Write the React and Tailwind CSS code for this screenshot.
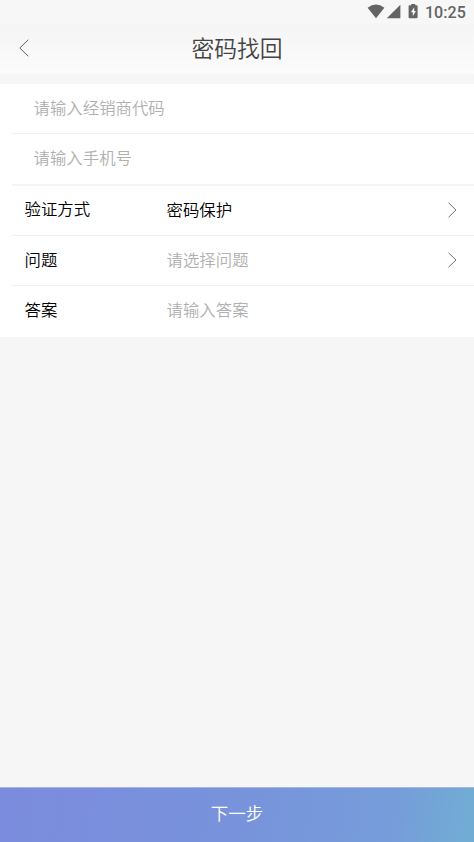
function Chevron({ left = false }) {
  return left ? (
    <svg width="10" height="18" viewBox="0 0 10 18" fill="none" stroke="#606060" strokeWidth="1">
      <path d="M9.3 .7 .8 9l8.5 8.3" />
    </svg>
  ) : (
    <svg width="9" height="16" viewBox="0 0 9 16" fill="none" stroke="#707070" strokeWidth="1">
      <path d="M.5 .8 8 8 .5 15.2" />
    </svg>
  );
}

function StatusBar() {
  return (
    <div className="flex h-6 items-start justify-end bg-[#f7f7f7] pr-2 text-[#646464]">
      <svg className="mt-1" width="54" height="16" viewBox="0 0 54 16" fill="currentColor">
        <path d="M.6 3.7Q9-2.7 17.4 3.7L9 14.3Z" />
        <path d="M33.4 .7V14.3H19.8Z" />
        <path fillRule="evenodd" d="M44.2 1.3V0h4v1.3h1.4q1 0 1 1v11q0 1-1 1h-7q-1 0-1-1v-11q0-1 1-1ZM47.2 3.2 43.9 8.3h1.9v4l3.1-5.4h-1.7Z" />
      </svg>
      <span className="ml-[4px] font-[Roboto] text-[16px] font-medium leading-[25px] tracking-[0.1px]">10:25</span>
    </div>
  );
}

function Row({ label, value, muted, arrow, last, raised }) {
  return (
    <div className={`ml-3 flex h-[50px] items-center border-[#f0f0f0] pl-[12.6px] pr-[17px] ${last ? "" : "border-b"}`}>
      <span className={`w-[142px] text-black ${raised ? "pb-[6px]" : "pb-1"}`}>{label}</span>
      <span className={`flex-1 pb-1 ${muted ? "text-[#b0b0b0]" : "text-black"}`}>{value}</span>
      {arrow && <span className="pb-[2px]"><Chevron /></span>}
    </div>
  );
}

export default function App() {
  return (
    <main className="flex h-[842px] w-[474px] flex-col overflow-hidden bg-[#f6f6f6] font-['Noto_Sans_CJK_SC',sans-serif] font-[350]">
      <StatusBar />
      <header className="grid h-[50px] grid-cols-[80px_1fr_80px] items-center bg-gradient-to-b from-[#f5f5f5] to-[#fbfbfb]">
        <button className="pb-[2px] pl-[19px]" aria-label="返回"><Chevron left /></button>
        <h1 className="pb-[2px] text-center text-[22.8px] font-[350] leading-[48px] text-[#444]">密码找回</h1>
      </header>
      <section className="mt-[10px] h-[253px] bg-white text-[16.4px] leading-6">
        <div className="ml-3 flex h-[50px] items-center border-b border-[#f0f0f0] pb-1 pl-[21.6px] text-[#b0b0b0]">请输入经销商代码</div>
        <div className="ml-3 flex h-[52px] items-center border-b-2 border-[#f5f5f5] pb-1 pl-[21.6px] text-[#b0b0b0]">请输入手机号</div>
        <Row label="验证方式" value="密码保护" arrow raised />
        <Row label="问题" value="请选择问题" muted arrow />
        <Row label="答案" value="请输入答案" muted last />
      </section>
      <button className="mt-auto h-[55px] border-t border-[#a9b5e4] bg-[linear-gradient(100deg,#7b8bdd_0%,#7892dc_45%,#769cda_82%,#71acd4_98%)] pb-1 text-[17.5px] text-white">下一步</button>
    </main>
  );
}
